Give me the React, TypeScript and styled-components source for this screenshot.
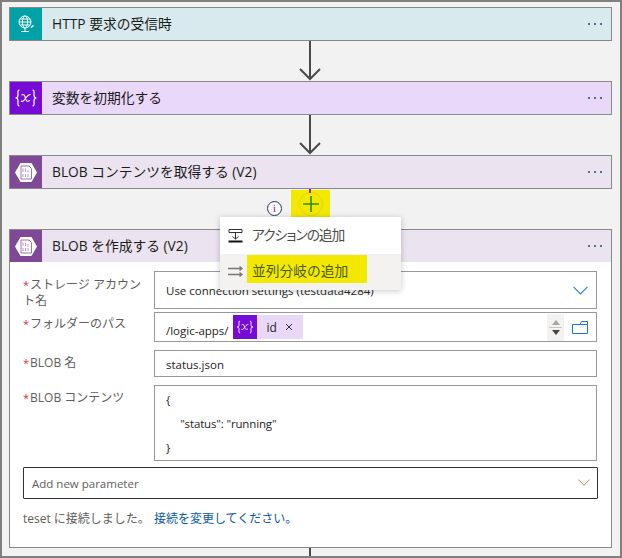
import React from "react";
import styled, { createGlobalStyle } from "styled-components";

const Global = createGlobalStyle`
  html, body { margin: 0; padding: 0; background: #f2f2f2; }
  * { box-sizing: border-box; }
`;

const FONT = `"Open Sans", "Noto Sans CJK JP", sans-serif`;

const Page = styled.div`
  width: 622px;
  height: 558px;
  border: 2px solid #808080;
  background: #f2f2f2;
  padding: 5px 8px 0 7px;
  overflow: hidden;
  font-family: ${FONT};
  color: #252423;
`;

const Card = styled.section`
  width: 603px;
  border: 1px solid #8a8886;
  background: #fff;
`;

const Header = styled.header<{ $tint: string }>`
  height: 32px;
  display: flex;
  align-items: center;
  background: ${(p) => p.$tint};
`;

const IconTile = styled.div<{ $color: string }>`
  width: 32px;
  height: 32px;
  flex: none;
  display: flex;
  align-items: center;
  justify-content: center;
  background: ${(p) => p.$color};
`;

const Title = styled.h2`
  flex: 1;
  margin: 0 0 0 10px;
  font-size: 13.75px;
  line-height: 32px;
  font-weight: 400;
  color: #1b1a19;
  white-space: nowrap;
`;

const Dots = styled.div`
  display: flex;
  gap: 4px;
  margin-right: 9px;
`;

const Dot = styled.i`
  width: 2px;
  height: 2px;
  background: #4f6f94;
`;

const Connector = styled.div`
  position: relative;
  height: 40px;
  padding-right: 1px;
  display: flex;
  justify-content: center;
`;

const ShortLine = styled.div`
  width: 2px;
  height: 9px;
  margin-left: 300px;
  background: #4a4a4a;
`;

const AddRow = styled.div`
  position: absolute;
  left: 257px;
  top: 0;
  width: 122px;
  height: 28px;
`;

const InfoBadge = styled.span`
  position: absolute;
  left: 1px;
  top: 12px;
  width: 15px;
  height: 15px;
  border-radius: 50%;
  border: 1px solid #1f2f5a;
  background: #fff;
  color: #5b0f6b;
  font: 10px/13px "Liberation Serif", serif;
  text-align: center;
`;

const RedTick = styled.i`
  position: absolute;
  left: 43px;
  top: 0;
  width: 2px;
  height: 4px;
  background: #a4262c;
  z-index: 2;
`;

const PlusHighlight = styled.div`
  position: absolute;
  left: 25px;
  top: 1px;
  width: 39px;
  height: 28px;
  background: #f3e800;
  display: flex;
  align-items: center;
  justify-content: center;
`;

const PlusCircle = styled.div`
  width: 24px;
  height: 24px;
  border-radius: 50%;
  border: 1px solid #dfd60a;
  display: flex;
  align-items: center;
  justify-content: center;
`;

const Menu = styled.div`
  position: absolute;
  left: 211px;
  top: 28px;
  width: 181px;
  height: 73px;
  background: #fff;
  box-shadow: 0 1px 6px rgba(0, 0, 0, 0.22);
  z-index: 3;
  display: flex;
  flex-direction: column;
`;

const MenuItem = styled.div<{ $active?: boolean }>`
  flex: 1;
  display: flex;
  align-items: center;
  padding-left: 8px;
  gap: 9px;
  background: ${(p) => (p.$active ? "#f3f2f1" : "#fff")};
  font-size: 13.75px;
  color: #4b4a49;
`;

const MenuLabel = styled.span`
  font-feature-settings: "palt";
  letter-spacing: -1px;
  margin-top: -2px;
  white-space: nowrap;
`;

const MenuHighlight = styled.span`
  align-self: flex-start;
  margin: 1px 0 0 -5px;
  padding: 3px 6px 0 5px;
  width: 120px;
  height: 28px;
  line-height: 26px;
  background: #f3e800;
  color: #4c5a00;
  white-space: nowrap;
`;

const Body = styled.div`
  padding: 9px 13px 0 13px;
  height: 285px;
`;

const FieldRow = styled.div<{ $h: number; $gap: number }>`
  display: grid;
  grid-template-columns: 131px 443px;
  height: ${(p) => p.$h}px;
  margin-bottom: ${(p) => p.$gap}px;
`;

const Label = styled.label<{ $top: number }>`
  font-size: 12px;
  line-height: 16px;
  padding-top: ${(p) => p.$top}px;
  color: #605e5c;
  width: 124px;
`;

const Star = styled.span`
  color: #d13438;
  font-size: 11px;
  margin-right: 1px;
`;

const Field = styled.div<{ $shift?: number }>`
  border: 1px solid #989898;
  background: #fff;
  display: flex;
  align-items: center;
  padding: ${(p) => p.$shift ?? 0}px 0 0 11px;
  font-size: 11.5px;
  color: #252423;
  position: relative;
`;

const FieldText = styled.span`
  flex: 1;
  white-space: nowrap;
`;

const PathText = styled.span`
  padding-top: 6px;
  white-space: nowrap;
`;

const Token = styled.span`
  display: flex;
  align-items: center;
  height: 24px;
  margin-left: 4px;
  width: 70px;
  background: #ead8f8;
`;

const TokenIcon = styled.span`
  width: 24px;
  height: 24px;
  background: #770bd6;
  display: flex;
  align-items: center;
  justify-content: center;
`;

const TokenLabel = styled.span`
  margin-left: 10px;
  font-size: 12px;
`;

const TokenClose = styled.span`
  margin-left: 8px;
  display: flex;
`;

const Spacer = styled.span`
  flex: 1;
`;

const Spin = styled.span`
  width: 17px;
  height: 27px;
  background: #f3f2f1;
  display: flex;
  flex-direction: column;
  align-items: center;
  justify-content: space-between;
  padding: 6px 0 6px;
  margin-right: 8px;
`;

const SpinRule = styled.i`
  width: 13px;
  height: 1px;
  background: #c8c6c4;
`;

const Caret = styled.span`
  display: flex;
  margin-right: 8px;
`;

const Code = styled.div`
  flex: 1;
  align-self: stretch;
  padding-top: 2px;
  font-size: 11.5px;
  letter-spacing: -0.15px;
  line-height: 24px;
  white-space: pre;
`;

const AddParam = styled.div`
  width: 575px;
  height: 32px;
  margin-top: 7px;
  border: 1px solid #323130;
  border-radius: 1px;
  display: flex;
  align-items: center;
  justify-content: space-between;
  padding: 0 7px 0 8px;
  font-size: 11.5px;
  color: #605e5c;
`;

const ConnectionLine = styled.p`
  margin: 12px 0 0;
  font-size: 12px;
  line-height: 16px;
  color: #605e5c;
  white-space: nowrap;
`;

const ChangeLink = styled.a`
  margin-left: 4px;
  color: #0b5a9e;
`;

const Arrow = () => (
  <svg width="24" height="40" viewBox="0 0 24 40" fill="none" stroke="#4a4a4a" strokeWidth="2">
    <path d="M12 0V38M2 28L12 38L22 28" />
  </svg>
);

const GlobeIcon = () => (
  <svg width="20" height="20" viewBox="0 0 20 20" fill="none" stroke="#fff" strokeWidth="1">
    <circle cx="9" cy="8" r="6" />
    <ellipse cx="9" cy="8" rx="2.6" ry="6" />
    <path d="M3 8H15M4 5H14M4 11H14M9 14V17M5 17.5H13" />
    <path d="M15 13.5L17.5 11.5" strokeWidth="1.6" />
  </svg>
);

const VarIcon = ({ size }: { size: number }) => (
  <svg width={size} height={size} viewBox="0 0 24 24" fill="none" stroke="#fff" strokeWidth="1.2">
    <path d="M5.5 4C3.4 4 4 6 4 9C4 11 3.2 12 1.5 12C3.2 12 4 13 4 15C4 18 3.4 20 5.5 20" />
    <path d="M18.5 4C20.6 4 20 6 20 9C20 11 20.8 12 22.5 12C20.8 12 20 13 20 15C20 18 20.6 20 18.5 20" />
    <path d="M7.5 9C10 7.5 10.8 9.5 11.4 12C12 15 13 16 16 14.5M16.5 8.5C14 8.5 12.5 11 11 13C9.5 15.5 8 16 6.8 14.8" strokeWidth="1.1" />
  </svg>
);

const BlobIcon = () => (
  <svg width="22" height="19" viewBox="0 0 22 19">
    <path d="M5.5 0H16.5L22 9.5L16.5 19H5.5L0 9.5Z" fill="#fff" />
    <path d="M6 3H14L16.5 5.5V16H6Z" fill="none" stroke="#9a78b0" strokeWidth="1" />
    <path d="M8 5.5V9M10.5 5.5V9M13 7V9.5M8 11V14M10.5 11V14M13 11V14" stroke="#b79ac6" strokeWidth="1" />
  </svg>
);

const Chevron = ({ size, color }: { size: number; color: string }) => (
  <svg width={size} height={size * 0.6} viewBox="0 0 15 9" fill="none" stroke={color} strokeWidth="1.2">
    <path d="M0.5 0.8L7.5 7.8L14.5 0.8" />
  </svg>
);

const Kebab = () => (
  <Dots>
    <Dot />
    <Dot />
    <Dot />
  </Dots>
);

export default function App() {
  return (
    <>
      <Global />
      <Page>
        <Card>
          <Header $tint="#d8eaee">
            <IconTile $color="#00a2a8">
              <GlobeIcon />
            </IconTile>
            <Title>HTTP 要求の受信時</Title>
            <Kebab />
          </Header>
        </Card>
        <Connector>
          <Arrow />
        </Connector>
        <Card>
          <Header $tint="#ead8f8">
            <IconTile $color="#770bd6">
              <VarIcon size={24} />
            </IconTile>
            <Title>変数を初期化する</Title>
            <Kebab />
          </Header>
        </Card>
        <Connector>
          <Arrow />
        </Connector>
        <Card>
          <Header $tint="#ebe3ef">
            <IconTile $color="#804998">
              <BlobIcon />
            </IconTile>
            <Title>BLOB コンテンツを取得する (V2)</Title>
            <Kebab />
          </Header>
        </Card>
        <Connector>
          <AddRow>
            <InfoBadge>i</InfoBadge>
            <RedTick />
            <PlusHighlight>
              <PlusCircle>
                <svg width="16" height="16" viewBox="0 0 16 16" stroke="#2f8a1e" strokeWidth="1.6">
                  <path d="M8 0V16M0 8H16" />
                </svg>
              </PlusCircle>
            </PlusHighlight>
          </AddRow>
          <Menu>
            <MenuItem>
              <svg width="15" height="15" viewBox="0 0 15 15" fill="none" stroke="#333" strokeWidth="1">
                <path d="M1 1.5H14M1 1.5V4.5H14V1.5M7.5 4.5V11M4.5 8.5L7.5 11L10.5 8.5" />
                <path d="M0.5 13.5H14.5" strokeWidth="2" stroke="#111" />
              </svg>
              <MenuLabel>アクションの追加</MenuLabel>
            </MenuItem>
            <MenuItem $active>
              <svg width="15" height="11" viewBox="0 0 15 11" fill="none" stroke="#777" strokeWidth="1.4">
                <path d="M0 2.5H14M11.5 0.5L14 2.5L11.5 4.5M0 8.5H14M11.5 6.5L14 8.5L11.5 10.5" />
              </svg>
              <MenuHighlight>並列分岐の追加</MenuHighlight>
            </MenuItem>
          </Menu>
        </Connector>
        <Card>
          <Header $tint="#ebe3ef">
            <IconTile $color="#804998">
              <BlobIcon />
            </IconTile>
            <Title>BLOB を作成する (V2)</Title>
            <Kebab />
          </Header>
          <Body>
            <FieldRow $h={30} $gap={11}>
              <Label $top={6}>
                <Star>*</Star>ストレージ アカウント名
              </Label>
              <Field>
                <FieldText>Use connection settings (testdata4284)</FieldText>
                <Caret>
                  <Chevron size={15} color="#2f7fd6" />
                </Caret>
              </Field>
            </FieldRow>
            <FieldRow $h={30} $gap={8}>
              <Label $top={4}>
                <Star>*</Star>フォルダーのパス
              </Label>
              <Field>
                <PathText>/logic-apps/</PathText>
                <Token>
                  <TokenIcon>
                    <VarIcon size={18} />
                  </TokenIcon>
                  <TokenLabel>id</TokenLabel>
                  <TokenClose>
                    <svg width="8" height="8" viewBox="0 0 8 8" stroke="#333" strokeWidth="1">
                      <path d="M1 1L7 7M7 1L1 7" />
                    </svg>
                  </TokenClose>
                </Token>
                <Spacer />
                <Spin>
                  <svg width="8" height="5" viewBox="0 0 8 5">
                    <path d="M4 0L8 5H0Z" fill="#a6a6a6" />
                  </svg>
                  <SpinRule />
                  <svg width="8" height="5" viewBox="0 0 8 5">
                    <path d="M0 0H8L4 5Z" fill="#444" />
                  </svg>
                </Spin>
                <svg width="16" height="13" viewBox="0 0 16 13" fill="none" stroke="#1f74d8" strokeWidth="1" style={{ marginRight: 8 }}>
                  <path d="M0.5 3.5H15.5V12.5H0.5ZM8 3.5L9.5 0.5H15.5V3.5" />
                </svg>
              </Field>
            </FieldRow>
            <FieldRow $h={27} $gap={8}>
              <Label $top={5}>
                <Star>*</Star>BLOB 名
              </Label>
              <Field $shift={1}>
                <FieldText>status.json</FieldText>
              </Field>
            </FieldRow>
            <FieldRow $h={75} $gap={0}>
              <Label $top={5}>
                <Star>*</Star>BLOB コンテンツ
              </Label>
              <Field>
                <Code>{'{\n     "status": "running"\n}'}</Code>
              </Field>
            </FieldRow>
            <AddParam>
              Add new parameter
              <Chevron size={12} color="#a8854f" />
            </AddParam>
            <ConnectionLine>
              teset に接続しました。
              <ChangeLink>接続を変更してください。</ChangeLink>
            </ConnectionLine>
          </Body>
        </Card>
        <ShortLine />
      </Page>
    </>
  );
}
